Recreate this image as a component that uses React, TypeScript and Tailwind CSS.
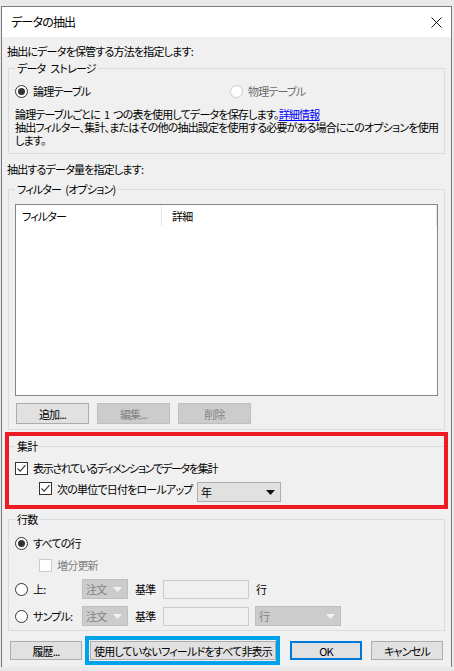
import React from 'react';

const Check = () => (
  <svg width="11" height="11" viewBox="0 0 11 11" className="block">
    <path d="M1.5 5.5 L4.2 8.2 L9.5 2.2" fill="none" stroke="#333" strokeWidth="1.1" />
  </svg>
);

function CheckBox({ checked, disabled }: { checked?: boolean; disabled?: boolean }) {
  return (
    <span
      className={`w-[13px] h-[13px] shrink-0 border bg-white flex items-center justify-center ${
        disabled ? 'border-[#cccccc]' : 'border-[#333333]'
      }`}
    >
      {checked && <Check />}
    </span>
  );
}

function Radio({ checked, disabled }: { checked?: boolean; disabled?: boolean }) {
  return (
    <span
      className={`w-[13px] h-[13px] shrink-0 rounded-full border bg-white flex items-center justify-center ${
        disabled ? 'border-[#cccccc]' : 'border-[#333333]'
      }`}
    >
      {checked && <span className="w-[7px] h-[7px] rounded-full bg-[#333333]" />}
    </span>
  );
}

function Btn({ children, disabled, w, h = 'h-[20px]' }: { children: React.ReactNode; disabled?: boolean; w: string; h?: string }) {
  return (
    <div
      className={`${w} ${h} border flex items-center justify-center whitespace-nowrap ${
        disabled ? 'bg-[#cccccc] border-[#bfbfbf] text-[#838383]' : 'bg-[#e1e1e1] border-[#adadad] text-black'
      }`}
    >
      {children}
    </div>
  );
}

function Arrow({ color }: { color: string }) {
  return (
    <svg width="9" height="5" viewBox="0 0 9 5" className="block">
      <path d="M0 0 L9 0 L4.5 5 Z" fill={color} />
    </svg>
  );
}

function DisabledSelect({ label, w }: { label: string; w: string }) {
  return (
    <div className={`${w} h-[20px] bg-[#cccccc] border border-[#bfbfbf] flex items-center justify-between pl-[3px] pr-[5px] text-[#838383]`}>
      <span>{label}</span>
      <Arrow color="#f2f2f2" />
    </div>
  );
}

export default function App() {
  return (
    <div className="w-[454px] h-[671px] bg-[#e9e9e9] overflow-hidden pt-[6px] pl-[1px] font-['Noto_Sans_CJK_JP',sans-serif] [font-feature-settings:'palt'] text-[11px] tracking-[-0.8px] leading-[16px] text-black">
      <div className="w-[451px] h-[661px] border border-[#7a7a7a] border-b-0 bg-[#f0f0f0] flex flex-col">
        {/* title bar */}
        <div className="h-[30px] bg-white flex items-center justify-between pl-[9px] pr-[9px] shrink-0">
          <span className="text-[12px]">データの抽出</span>
          <svg width="11" height="11" viewBox="0 0 11 11">
            <path d="M0.5 0.5 L10.5 10.5 M10.5 0.5 L0.5 10.5" stroke="#111" strokeWidth="1" />
          </svg>
        </div>

        <div className="mt-[6px] pl-[5px] h-[16px]">抽出にデータを保管する方法を指定します:</div>

        {/* data storage */}
        <fieldset className="mt-[1px] mx-[6px] border border-[#dcdcdc] pb-[6px]">
          <legend className="ml-[6px] px-[2px]">
            データ<span className="ml-[5px]">ストレージ</span>
          </legend>
          <div className="mt-[7px] pl-[6px] h-[16px] flex items-center">
            <Radio checked />
            <span className="ml-[5px] w-[197px]">論理テーブル</span>
            <span className="flex items-center text-[#6d6d6d]">
              <Radio disabled />
              <span className="ml-[5px]">物理テーブル</span>
            </span>
          </div>
          <div className="mt-[9px] pl-[6px] leading-[13px]">
            <div className="h-[13px]">
              論理テーブルごとに<span className="mx-[4px]">1</span>つの表を使用してデータを保存します。
              <span className="text-[#0000ff] underline">詳細情報</span>
            </div>
            <div className="h-[13px] whitespace-nowrap">抽出フィルター、集計、またはその他の抽出設定を使用する必要がある場合にこのオプションを使用</div>
            <div className="h-[13px]">します。</div>
          </div>
        </fieldset>

        <div className="mt-[7px] pl-[5px] h-[16px]">抽出するデータ量を指定します:</div>

        {/* filters */}
        <fieldset className="mt-[4px] mx-[6px] border border-[#dcdcdc] pb-[5px]">
          <legend className="ml-[6px] px-[2px]">
            フィルター<span className="ml-[4px]">(オプション)</span>
          </legend>
          <div className="mt-[7px] mx-[6px] h-[192px] bg-white border border-[#828790]">
            <div className="flex h-[21px] items-center">
              <div className="w-[146px] h-full border-r border-[#e5e5e5] pl-[6px] flex items-center">フィルター</div>
              <div className="flex-1 h-full border-r border-[#e5e5e5] pl-[10px] flex items-center">詳細</div>
            </div>
          </div>
          <div className="mt-[7px] ml-[7px] flex gap-[8px]">
            <Btn w="w-[73px]" h="h-[21px]">追加...</Btn>
            <Btn w="w-[73px]" h="h-[21px]" disabled>編集...</Btn>
            <Btn w="w-[73px]" h="h-[21px]" disabled>削除</Btn>
          </div>
        </fieldset>

        {/* aggregation, highlighted */}
        <div className="mt-[2px] mx-[3px] h-[77px] border-4 border-[#ed1c24]">
          <fieldset className="mt-[2px] border-t border-[#dcdcdc]">
            <legend className="ml-[6px] px-[2px]">集計</legend>
            <div className="mt-[6px] pl-[6px] h-[16px] flex items-center">
              <CheckBox checked />
              <span className="ml-[5px] tracking-[-1.3px]">表示されているディメンションでデータを集計</span>
            </div>
            <div className="mt-[6px] pl-[30px] h-[20px] flex items-start">
              <CheckBox checked />
              <span className="ml-[5px] w-[140px] leading-[14px]">次の単位で日付をロールアップ</span>
              <div className="w-[84px] h-[20px] bg-[#e1e1e1] border border-[#adadad] flex items-center justify-between pl-[3px] pr-[5px]">
                <span>年</span>
                <Arrow color="#111" />
              </div>
            </div>
          </fieldset>
        </div>

        {/* row count */}
        <fieldset className="mt-[2px] mx-[6px] border border-[#dcdcdc] pb-[4px]">
          <legend className="ml-[6px] px-[2px]">行数</legend>
          <div className="mt-[8px] pl-[6px] h-[16px] flex items-center">
            <Radio checked />
            <span className="ml-[5px]">すべての行</span>
          </div>
          <div className="mt-[6px] pl-[30px] h-[16px] flex items-center text-[#838383]">
            <CheckBox disabled />
            <span className="ml-[5px]">増分更新</span>
          </div>
          <div className="mt-[6px] pl-[6px] h-[20px] flex items-center">
            <div className="w-[67px] flex items-center">
              <Radio />
              <span className="ml-[5px]">上:</span>
            </div>
            <DisabledSelect label="注文" w="w-[46px]" />
            <span className="ml-[7px] w-[28px]">基準</span>
            <div className="w-[86px] h-[19px] border border-[#cccccc] bg-[#f0f0f0]" />
            <span className="ml-[7px]">行</span>
          </div>
          <div className="mt-[7px] pl-[6px] h-[20px] flex items-center">
            <div className="w-[67px] flex items-center">
              <Radio />
              <span className="ml-[5px]">サンプル:</span>
            </div>
            <DisabledSelect label="注文" w="w-[46px]" />
            <span className="ml-[7px] w-[28px]">基準</span>
            <div className="w-[86px] h-[19px] border border-[#cccccc] bg-[#f0f0f0]" />
            <div className="ml-[6px]">
              <DisabledSelect label="行" w="w-[86px]" />
            </div>
          </div>
        </fieldset>

        {/* bottom buttons */}
        <div className="mt-[5px] pl-[8px] flex items-center">
          <Btn w="w-[72px]" h="h-[19px]">履歴...</Btn>
          <div className="ml-[3px] border-4 border-[#00a2e8] pl-[1px] py-[1px]">
            <Btn w="w-[186px]" h="h-[19px]">使用していないフィールドをすべて非表示</Btn>
          </div>
          <div className="ml-[10px] w-[72px] h-[19px] bg-[#e1e1e1] border-2 border-[#0078d7] flex items-center justify-center">OK</div>
          <div className="ml-[9px]">
            <Btn w="w-[72px]" h="h-[19px]">キャンセル</Btn>
          </div>
        </div>
      </div>
    </div>
  );
}
